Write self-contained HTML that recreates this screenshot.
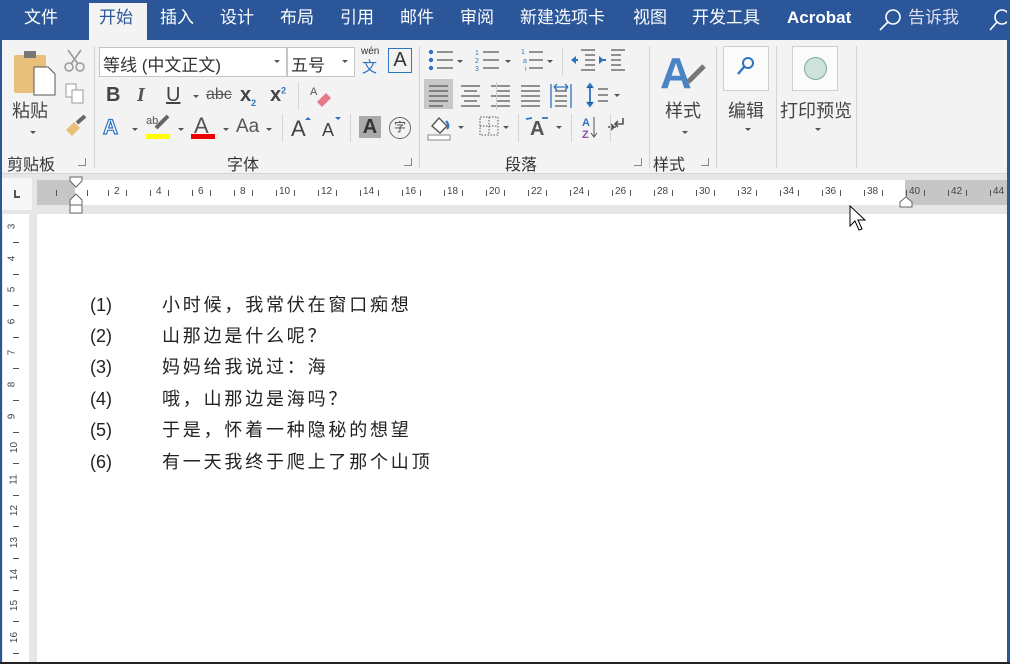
<!DOCTYPE html>
<html><head><meta charset="utf-8">
<style>
*{margin:0;padding:0;box-sizing:border-box}
html,body{width:1010px;height:664px;overflow:hidden}
body{background:#fff;font-family:"Liberation Sans","Noto Sans CJK SC",sans-serif;position:relative}
.a{position:absolute;white-space:nowrap}
.tab{position:absolute;top:8px;color:#fff;font-size:17px;line-height:20px}
.cj{font-family:"Liberation Sans","Noto Sans CJK SC",sans-serif}
.g{color:#444}
.sep{position:absolute;width:1px;background:#d4d4d4}
.dd{position:absolute;width:0;height:0;border-left:3px solid transparent;border-right:3px solid transparent;border-top:3px solid #555}
.rn{position:absolute;top:186px;font-size:10px;color:#444}
.vn{position:absolute;left:9px;font-size:10px;color:#444;transform:rotate(-90deg)}
.doc{position:absolute;font-size:18px;color:#222;line-height:22px}
.t{letter-spacing:2.8px}
</style></head><body>
<div class="a" style="left:0;top:0;width:1010px;height:40px;background:#2b579a"></div>
<div class="a" style="left:89px;top:3px;width:58px;height:38px;background:#f3f3f3"></div>
<div class="tab" style="left:24px">文件</div>
<div class="tab" style="left:99px;color:#2b579a">开始</div>
<div class="tab" style="left:160px">插入</div>
<div class="tab" style="left:220px">设计</div>
<div class="tab" style="left:280px">布局</div>
<div class="tab" style="left:340px">引用</div>
<div class="tab" style="left:400px">邮件</div>
<div class="tab" style="left:460px">审阅</div>
<div class="tab" style="left:520px">新建选项卡</div>
<div class="tab" style="left:633px">视图</div>
<div class="tab" style="left:692px">开发工具</div>
<div class="tab" style="left:787px;font-weight:bold">Acrobat</div>
<svg class="a" style="left:878px;top:8px" width="24" height="24"><circle cx="15" cy="9" r="7" fill="none" stroke="#fff" stroke-width="1.6"/><line x1="10" y1="14" x2="2" y2="22" stroke="#fff" stroke-width="1.6"/></svg>
<div class="tab" style="left:908px;color:#dde">告诉我</div>
<svg class="a" style="left:988px;top:8px" width="22" height="24"><circle cx="14" cy="9" r="7" fill="none" stroke="#fff" stroke-width="1.6"/><line x1="9" y1="14" x2="2" y2="22" stroke="#fff" stroke-width="1.6"/></svg>
<div class="a" style="left:0;top:40px;width:1010px;height:134px;background:#f3f3f3"></div>
<div class="a" style="left:0;top:173px;width:1010px;height:1px;background:#d6d6d6"></div>
<svg class="a" style="left:12px;top:49px" width="45" height="48"><rect x="2" y="6" width="32" height="38" rx="2" fill="#e9c07a"/><rect x="12" y="2" width="12" height="7" fill="#777"/><path d="M22 18h14l7 7v21H22z" fill="#fff" stroke="#555"/></svg>
<div class="a cj g" style="left:12px;top:97px;font-size:18px">粘贴</div>
<div class="dd" style="left:30px;top:131px"></div>
<svg class="a" style="left:64px;top:49px" width="22" height="24"><circle cx="5" cy="18" r="4" fill="none" stroke="#999" stroke-width="1.5"/><circle cx="16" cy="18" r="4" fill="none" stroke="#999" stroke-width="1.5"/><path d="M7 15L17 1M14 15L4 1" stroke="#999" stroke-width="1.6"/></svg>
<svg class="a" style="left:64px;top:83px" width="22" height="22"><rect x="2" y="1" width="10" height="13" fill="#fff" stroke="#999"/><rect x="8" y="7" width="11" height="13" fill="#fff" stroke="#999"/></svg>
<svg class="a" style="left:63px;top:115px" width="24" height="24"><path d="M3 15l8-8 6 6-8 8z" fill="#e9c07a"/><path d="M14 8l8-7" stroke="#666" stroke-width="4"/></svg>
<div class="a cj" style="left:7px;top:151px;font-size:16px;color:#333">剪贴板</div>
<div class="a" style="left:78px;top:158px;width:8px;height:8px;border:1px solid #888;border-top:none;border-left:none"></div>
<div class="sep" style="left:94px;top:46px;height:122px"></div>
<div class="a" style="left:99px;top:47px;width:188px;height:30px;background:#fff;border:1px solid #c6c6c6"></div>
<div class="a cj" style="left:103px;top:51px;font-size:17px;color:#333">等线 (中文正文)</div>
<div class="dd" style="left:274px;top:60px"></div>
<div class="a" style="left:287px;top:47px;width:68px;height:30px;background:#fff;border:1px solid #c6c6c6"></div>
<div class="a cj" style="left:291px;top:51px;font-size:17px;color:#333">五号</div>
<div class="dd" style="left:342px;top:60px"></div>
<div class="a" style="left:361px;top:46px;font-size:10px;color:#333">wén</div>
<div class="a cj" style="left:362px;top:56px;font-size:15px;color:#2f74c0">文</div>
<div class="a" style="left:388px;top:48px;width:24px;height:25px;border:1px solid #2f74c0;font-size:20px;color:#333;text-align:center;line-height:23px">A</div>
<div class="a" style="left:106px;top:84px;font-size:20px;font-weight:bold;color:#444">B</div>
<div class="a" style="left:137px;top:84px;font-size:20px;font-style:italic;font-family:'Liberation Serif',serif;font-weight:bold;color:#555">I</div>
<div class="a" style="left:166px;top:84px;font-size:20px;color:#444;text-decoration:underline">U</div>
<div class="dd" style="left:193px;top:95px"></div>
<div class="a" style="left:206px;top:86px;font-size:16px;color:#555;text-decoration:line-through">abc</div>
<div class="a" style="left:240px;top:84px;font-size:20px;font-weight:bold;color:#444">x<sub style="font-size:9px;color:#2f74c0">2</sub></div>
<div class="a" style="left:270px;top:84px;font-size:20px;font-weight:bold;color:#444">x<sup style="font-size:9px;color:#2f74c0">2</sup></div>
<div class="sep" style="left:298px;top:82px;height:28px"></div>
<svg class="a" style="left:309px;top:84px" width="24" height="24"><text x="1" y="11" font-size="11" fill="#555" font-family="Liberation Sans">A</text><path d="M8 18l9-9 5 5-9 9z" fill="#e8798a"/></svg>
<div class="a" style="left:103px;top:116px;font-size:21px;color:#fff;-webkit-text-stroke:1.2px #2f74c0;font-weight:bold">A</div>
<div class="dd" style="left:132px;top:128px"></div>
<div class="a" style="left:146px;top:115px;font-size:11px;color:#555">ab</div>
<svg class="a" style="left:152px;top:114px" width="20" height="18"><path d="M4 14L16 2" stroke="#666" stroke-width="4"/></svg>
<div class="a" style="left:146px;top:134px;width:24px;height:5px;background:#ff0"></div>
<div class="dd" style="left:178px;top:128px"></div>
<div class="a" style="left:194px;top:113px;font-size:22px;color:#555">A</div>
<div class="a" style="left:191px;top:134px;width:24px;height:5px;background:#e00"></div>
<div class="dd" style="left:223px;top:128px"></div>
<div class="a" style="left:236px;top:116px;font-size:19px;color:#555">Aa</div>
<div class="dd" style="left:266px;top:128px"></div>
<div class="sep" style="left:282px;top:114px;height:28px"></div>
<div class="a" style="left:291px;top:116px;font-size:22px;color:#444">A</div>
<div class="dd" style="left:305px;top:117px;border-top:none;border-bottom:3px solid #2f74c0"></div>
<div class="a" style="left:322px;top:120px;font-size:18px;color:#444">A</div>
<div class="dd" style="left:335px;top:117px;border-top-color:#2f74c0"></div>
<div class="sep" style="left:350px;top:114px;height:28px"></div>
<div class="a" style="left:359px;top:116px;width:22px;height:22px;background:#aaa;color:#333;font-size:20px;text-align:center;line-height:22px;font-weight:bold">A</div>
<div class="a cj" style="left:389px;top:117px;width:22px;height:22px;border:1.5px solid #666;border-radius:50%;font-size:12px;color:#444;text-align:center;line-height:19px">字</div>
<div class="a cj" style="left:227px;top:151px;font-size:16px;color:#333">字体</div>
<div class="a" style="left:404px;top:158px;width:8px;height:8px;border:1px solid #888;border-top:none;border-left:none"></div>
<div class="sep" style="left:419px;top:46px;height:122px"></div>
<svg class="a" style="left:425px;top:46px" width="225" height="100" stroke="#555" stroke-width="1.3">
<g fill="#2f74c0" stroke="none"><circle cx="6" cy="6" r="2.2"/><circle cx="6" cy="14" r="2.2"/><circle cx="6" cy="22" r="2.2"/></g>
<path d="M12 6h16M12 14h16M12 22h16M58 6h16M58 14h16M58 22h16M104 6h14M104 14h14M104 22h14"/>
<text x="50" y="9" font-size="7" fill="#2f74c0" stroke="none">1</text><text x="50" y="17" font-size="7" fill="#2f74c0" stroke="none">2</text><text x="50" y="25" font-size="7" fill="#2f74c0" stroke="none">3</text>
<text x="96" y="8" font-size="7" fill="#2f74c0" stroke="none">1</text><text x="98" y="17" font-size="7" fill="#2f74c0" stroke="none">a</text><text x="100" y="25" font-size="7" fill="#2f74c0" stroke="none">i</text>
<path d="M156 4h14M160 9h10M160 14h10M160 19h10M156 24h14M186 4h14M186 9h10M186 14h10M186 19h10M186 24h14" />
<path d="M146 14l5-4v8z M174 10l5 4-5 4z" fill="#2f74c0" stroke="none"/>
<path d="M147 14h6M175 14h6" stroke="#2f74c0" stroke-width="2"/>
</svg>
<div class="dd" style="left:457px;top:60px"></div><div class="dd" style="left:505px;top:60px"></div><div class="dd" style="left:547px;top:60px"></div>
<div class="sep" style="left:562px;top:48px;height:28px"></div>
<div class="a" style="left:424px;top:79px;width:29px;height:30px;background:#c8c8c8"></div>
<svg class="a" style="left:424px;top:79px" width="190" height="32" stroke="#555" stroke-width="1.3">
<path d="M5 7h19M5 12h19M5 17h19M5 22h19M5 27h14"/>
<path d="M37 7h19M40 12h13M37 17h19M40 22h13M37 27h19"/>
<path d="M67 7h19M72 12h14M67 17h19M72 22h14M67 27h19"/>
<path d="M97 7h19M97 12h19M97 17h19M97 22h19M97 27h19"/>
<path d="M127 5v24M147 5v24" stroke="#2f74c0"/>
<path d="M131 12h12M131 17h12M131 22h12M131 27h12"/>
<path d="M130 8h14M130 8l3-3M130 8l3 3M144 8l-3-3M144 8l-3 3" stroke="#2f74c0"/>
<path d="M166 6v20M163 9l3-4 3 4M163 23l3 4 3-4" stroke="#2f74c0" stroke-width="1.8"/>
<path d="M174 10h10M174 16h10M174 22h10"/>
</svg>
<div class="dd" style="left:614px;top:94px"></div>
<div class="sep" style="left:496px;top:82px;height:28px"></div>
<svg class="a" style="left:426px;top:113px" width="200" height="30">
<path d="M6 13l7-8 8 8-7 7z" fill="#fff" stroke="#555" stroke-width="1.4"/><path d="M20 8c3 3 3 6 1 8" stroke="#2f74c0" stroke-width="2" fill="none"/>
<rect x="2" y="22" width="22" height="5" fill="#fff" stroke="#888"/>
<rect x="54" y="4" width="18" height="18" fill="none" stroke="#555" stroke-dasharray="1.5 1.5"/><path d="M63 4v18M54 13h18" stroke="#555" stroke-dasharray="1.5 1.5"/>
<text x="104" y="22" font-size="20" font-weight="bold" fill="#555" font-family="Liberation Sans">A</text>
<path d="M100 6l6-1M116 5l6 0" stroke="#2f74c0" stroke-width="1.8"/>
<text x="156" y="13" font-size="11" font-weight="bold" fill="#2f74c0" font-family="Liberation Sans">A</text>
<text x="156" y="25" font-size="11" font-weight="bold" fill="#8c4fa8" font-family="Liberation Sans">Z</text>
<path d="M168 4v20M165 20l3 4 3-4" stroke="#555" fill="none"/>
<path d="M197 5v6h-8M192 8l-3 3 3 3M182 14h8M185 11l3 3-3 3" stroke="#555" stroke-width="1.6" fill="none"/>
</svg>
<div class="dd" style="left:458px;top:126px"></div><div class="dd" style="left:503px;top:126px"></div><div class="dd" style="left:556px;top:126px"></div>
<div class="sep" style="left:518px;top:114px;height:28px"></div><div class="sep" style="left:571px;top:114px;height:28px"></div><div class="sep" style="left:610px;top:114px;height:28px"></div>
<div class="a cj" style="left:505px;top:151px;font-size:16px;color:#333">段落</div>
<div class="a" style="left:634px;top:158px;width:8px;height:8px;border:1px solid #888;border-top:none;border-left:none"></div>
<div class="sep" style="left:649px;top:46px;height:122px"></div>
<svg class="a" style="left:660px;top:48px" width="48" height="44"><text x="0" y="40" font-size="44" font-weight="bold" fill="#4a84c4" font-family="Liberation Sans">A</text><path d="M28 34l16-16" stroke="#777" stroke-width="5"/></svg>
<div class="a cj g" style="left:665px;top:97px;font-size:18px">样式</div>
<div class="dd" style="left:682px;top:131px"></div>
<div class="a cj" style="left:653px;top:151px;font-size:16px;color:#333">样式</div>
<div class="a" style="left:701px;top:158px;width:8px;height:8px;border:1px solid #888;border-top:none;border-left:none"></div>
<div class="sep" style="left:716px;top:46px;height:122px"></div>
<div class="a" style="left:723px;top:46px;width:46px;height:45px;background:#fbfbfb;border:1px solid #cfcfcf"></div>
<svg class="a" style="left:736px;top:56px" width="20" height="22"><circle cx="12" cy="7" r="5" fill="none" stroke="#2f74c0" stroke-width="2"/><line x1="8" y1="11" x2="2" y2="18" stroke="#2f74c0" stroke-width="2.4"/></svg>
<div class="a cj g" style="left:728px;top:97px;font-size:18px">编辑</div>
<div class="dd" style="left:745px;top:128px"></div>
<div class="sep" style="left:776px;top:46px;height:122px"></div>
<div class="a" style="left:792px;top:46px;width:46px;height:45px;background:#fbfbfb;border:1px solid #cfcfcf"></div>
<div class="a" style="left:804px;top:57px;width:23px;height:23px;border-radius:50%;background:#cde2d8;border:1px solid #7fab95"></div>
<div class="a cj g" style="left:780px;top:97px;font-size:18px">打印预览</div>
<div class="dd" style="left:815px;top:128px"></div>
<div class="sep" style="left:856px;top:46px;height:122px"></div>
<div class="a" style="left:0;top:174px;width:1010px;height:40px;background:#e6e6e6"></div>
<div class="a" style="left:2px;top:178px;width:30px;height:32px;background:#f7f7f7"></div>
<div class="a" style="left:14px;top:190px;width:6px;height:8px;border-left:2px solid #555;border-bottom:2px solid #555"></div>
<div class="a" style="left:37px;top:180px;width:970px;height:25px;background:#fff"></div>
<div class="a" style="left:37px;top:180px;width:38px;height:25px;background:#c6c6c6"></div>
<div class="a" style="left:905px;top:180px;width:102px;height:25px;background:#c6c6c6"></div>
<svg class="a" style="left:69px;top:176px" width="14" height="38"><path d="M1 1h12v4l-6 6-6-6z M1 24l6-6 6 6v5H1zM1 29h12v8H1z" fill="#fff" stroke="#666"/></svg>
<svg class="a" style="left:899px;top:196px" width="14" height="12"><path d="M1 11V6l6-5 6 5v5z" fill="#fff" stroke="#666"/></svg>
<div id="hr"></div>
<div class="a" style="left:0;top:214px;width:37px;height:450px;background:#e6e6e6;overflow:hidden">
<div class="a" style="left:3px;top:0;width:26px;height:450px;background:#fff"></div>
<div id="vr"></div>
</div>
<div class="a" style="left:0;top:0;width:2px;height:664px;background:#2b579a"></div>
<div class="a" style="left:1007px;top:0;width:3px;height:664px;background:#2b579a"></div>
<div class="a" style="left:0;top:662px;width:1010px;height:2px;background:#222"></div>
<div class="doc" style="left:90px;top:294px">(1)</div><div class="doc t" style="left:162px;top:294px">小时候，我常伏在窗口痴想</div>
<div class="doc" style="left:90px;top:325px">(2)</div><div class="doc t" style="left:162px;top:325px">山那边是什么呢？</div>
<div class="doc" style="left:90px;top:356px">(3)</div><div class="doc t" style="left:162px;top:356px">妈妈给我说过：海</div>
<div class="doc" style="left:90px;top:388px">(4)</div><div class="doc t" style="left:162px;top:388px">哦，山那边是海吗？</div>
<div class="doc" style="left:90px;top:419px">(5)</div><div class="doc t" style="left:162px;top:419px">于是，怀着一种隐秘的想望</div>
<div class="doc" style="left:90px;top:451px">(6)</div><div class="doc t" style="left:162px;top:451px">有一天我终于爬上了那个山顶</div>
<svg class="a" style="left:849px;top:205px" width="20" height="28"><path d="M1 1v20l5-5 4 9 3-1-4-9h7z" fill="#fff" stroke="#000"/></svg>
<script>
var h='';
for(var n=2;n<=44;n+=2){var x=117+(n-2)*21;h+='<div class="rn" style="left:'+(x-(n>=10?6:3))+'px">'+n+'</div>';
h+='<div class="a" style="left:'+(x-9)+'px;top:190px;width:1px;height:6px;background:#555"></div><div class="a" style="left:'+(x+9)+'px;top:190px;width:1px;height:6px;background:#555"></div>';}
h+='<div class="a" style="left:56px;top:190px;width:1px;height:6px;background:#555"></div><div class="a" style="left:87px;top:190px;width:1px;height:6px;background:#555"></div>';
document.getElementById('hr').innerHTML=h;
var v='';
for(var m=3;m<=17;m++){var y=13+(m-3)*31.6;v+='<div class="vn" style="top:'+(y-6)+'px">'+m+'</div><div class="a" style="left:13px;top:'+(y+15)+'px;width:6px;height:1px;background:#555"></div>';}
document.getElementById('vr').innerHTML=v;
</script>
</body></html>
